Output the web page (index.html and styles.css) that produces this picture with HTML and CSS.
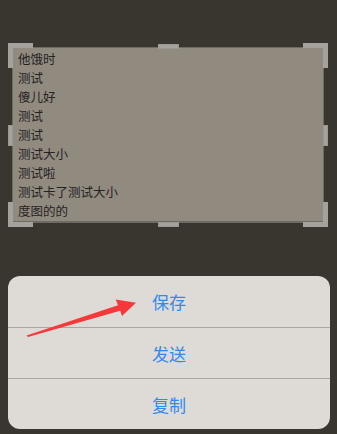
FILE: index.html
```html
<!DOCTYPE html>
<html lang="zh-CN">
<head>
  <meta charset="UTF-8" />
  <meta name="viewport" content="width=device-width, initial-scale=1.0"/>
  <title>文本选择</title>
  <link rel="stylesheet" href="styles.css">
</head>
<body>
  <div class="screen">
    <div class="text-box">
      <div class="text-line">他饿时</div>
      <div class="text-line">测试</div>
      <div class="text-line">傻儿好</div>
      <div class="text-line">测试</div>
      <div class="text-line">测试</div>
      <div class="text-line">测试大小</div>
      <div class="text-line">测试啦</div>
      <div class="text-line">测试卡了测试大小</div>
      <div class="text-line">度图的的</div>

      <span class="handle corner tl"></span>
      <span class="handle corner tr"></span>
      <span class="handle corner bl"></span>
      <span class="handle corner br"></span>
      <span class="handle edge-h top"></span>
      <span class="handle edge-h bottom"></span>
      <span class="handle edge-v left"></span>
      <span class="handle edge-v right"></span>
    </div>

    <div class="action-sheet">
      <button class="action">保存</button>
      <button class="action">发送</button>
      <button class="action">复制</button>
    </div>

    <svg class="arrow" width="337" height="434" viewBox="0 0 337 434" aria-hidden="true">
      <polygon points="26.5,335.5 118,305.2 115.8,299.5 136,302.8 122,316 120.2,310.8 28,337" fill="#f5393b"/>
    </svg>
  </div>
</body>
</html>
```

FILE: styles.css
```css
body {
  margin: 0;
  background: #39352f;
  font-family: "Noto Sans CJK SC", "Noto Sans", sans-serif;
}

.screen {
  position: relative;
  width: 337px;
  height: 434px;
  overflow: hidden;
  padding-top: 47px;
  box-sizing: border-box;
}

.text-box {
  position: relative;
  margin-left: 12px;
  width: 312px;
  height: 176px;
  box-sizing: border-box;
  background: #918a7f;
  border: 1px solid #6f6a62;
  border-bottom-width: 2px;
  padding: 1px 0 0 5px;
  color: #25221f;
  font-size: 12.5px;
  line-height: 19px;
}

.handle {
  position: absolute;
  background: #a5a29d;
  box-shadow: inset 0 0 0 1px #9a9792;
}

.corner {
  width: 20px;
  height: 20px;
  background: transparent;
  box-shadow: none;
}
.corner.tl {
  left: -5px;
  top: -5px;
  border-left: 5px solid #a5a29d;
  border-top: 5px solid #a5a29d;
}
.corner.tr {
  right: -5px;
  top: -5px;
  border-right: 5px solid #a5a29d;
  border-top: 5px solid #a5a29d;
}
.corner.bl {
  left: -5px;
  bottom: -6px;
  border-left: 5px solid #a5a29d;
  border-bottom: 5px solid #a5a29d;
}
.corner.br {
  right: -5px;
  bottom: -6px;
  border-right: 5px solid #a5a29d;
  border-bottom: 5px solid #a5a29d;
}

.edge-h {
  left: 145px;
  width: 21px;
  height: 5px;
}
.edge-h.top { top: -4px; }
.edge-h.bottom { bottom: -6px; }

.edge-v {
  top: 77px;
  width: 5px;
  height: 21px;
}
.edge-v.left { left: -5px; }
.edge-v.right { right: -5px; }

.action-sheet {
  margin: 53px 0 0 8px;
  width: 322px;
  background: #dedbd7;
  border-radius: 12px;
  display: flex;
  flex-direction: column;
  overflow: hidden;
}

.action {
  height: 51px;
  border: 0;
  background: transparent;
  font-family: "Noto Sans CJK SC", "Noto Sans", sans-serif;
  font-size: 17px;
  color: #3189ee;
  padding: 0;
}

.action + .action {
  border-top: 1px solid #aaa6a0;
}

.arrow {
  position: absolute;
  left: 0;
  top: 0;
  pointer-events: none;
}
```
